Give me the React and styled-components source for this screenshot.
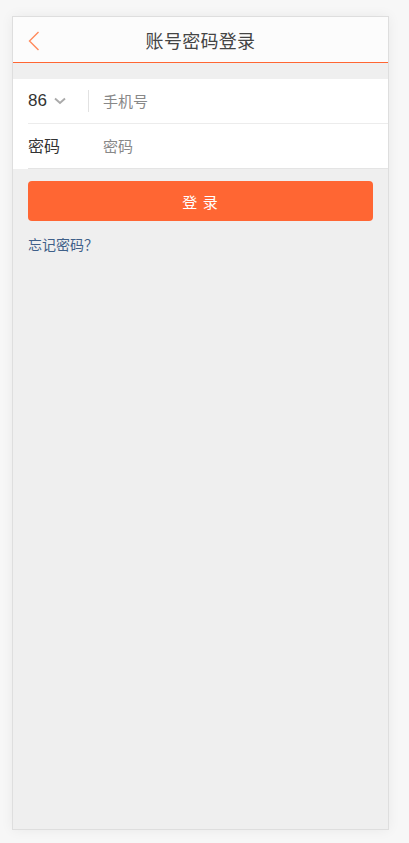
import React from 'react'
import styled, { createGlobalStyle } from 'styled-components'

const GlobalStyle = createGlobalStyle`
    html, body {
        margin: 0;
        padding: 0;
        background: #f7f7f7;
        font-family: "Liberation Sans", "Noto Sans CJK SC", sans-serif;
    }
`

function BackIcon() {
    return (
        <svg width="12" height="20" viewBox="0 0 12 20">
            <polyline
                points="10.5,1 1.5,10 10.5,19"
                fill="none"
                stroke="#ff8a5c"
                strokeWidth="1.4"
            />
        </svg>
    )
}

function ChevronDown() {
    return (
        <svg width="12" height="8" viewBox="0 0 12 8">
            <polyline
                points="1,1.5 6,6 11,1.5"
                fill="none"
                stroke="#aaa"
                strokeWidth="1.9"
            />
        </svg>
    )
}

function App() {
    return (
        <>
            <GlobalStyle />
            <Page>
                <Frame>
                    <Header>
                        <BackButton>
                            <BackIcon />
                        </BackButton>
                        <Title>账号密码登录</Title>
                    </Header>

                    <Form>
                        <Row divider>
                            <CountryCode>
                                86
                                <ChevronDown />
                            </CountryCode>
                            <Separator />
                            <Input placeholder="手机号" />
                        </Row>
                        <Row>
                            <Label>密码</Label>
                            <Input type="password" placeholder="密码" />
                        </Row>
                    </Form>

                    <Button type="button">登 录</Button>
                    <Forgot>忘记密码？</Forgot>
                </Frame>
            </Page>
        </>
    )
}

const Page = styled.div`
    padding: 16px 0 0 12px;
    height: 843px;
    box-sizing: border-box;
`

const Frame = styled.div`
    width: 377px;
    height: 814px;
    box-sizing: border-box;
    border: 1px solid #dedede;
    background: #efefef;
    box-shadow: 0 0 12px rgba(0, 0, 0, 0.06);
    display: flex;
    flex-direction: column;
`

const Header = styled.div`
    height: 45px;
    background: #fcfcfc;
    border-bottom: 1px solid #ff6633;
    display: flex;
    align-items: center;
    justify-content: center;
    position: relative;
`

const BackButton = styled.div`
    position: absolute;
    left: 15px;
    top: 14px;
    display: flex;
`

const Title = styled.h1`
    margin: 0;
    font-size: 18px;
    font-weight: normal;
    color: #444;
    letter-spacing: 0.3px;
    font-family: "Noto Sans CJK SC", sans-serif;
`

const Form = styled.div`
    margin-top: 16px;
    background: #fff;
    display: flex;
    flex-direction: column;
`

const Row = styled.div`
    height: 44px;
    margin-left: 15px;
    display: flex;
    align-items: center;
    border-bottom: 1px solid ${(p) => (p.divider ? '#ececec' : '#e4e4e4')};
`

const CountryCode = styled.div`
    width: 44px;
    display: flex;
    align-items: center;
    gap: 7px;
    font-size: 17px;
    color: #333;
    font-family: "Liberation Sans", sans-serif;
    padding-bottom: 1px;
`

const Separator = styled.div`
    width: 1px;
    height: 22px;
    background: #e2e2e2;
    margin: 0 14px 0 16px;
`

const Label = styled.div`
    width: 75px;
    font-size: 16px;
    color: #333;
    font-family: "Noto Sans CJK SC", sans-serif;
    padding-bottom: 2px;
`

const Input = styled.input`
    flex: 1;
    border: none;
    outline: none;
    background: transparent;
    font-size: 15px;
    color: #333;
    padding: 0 0 2px;
    font-family: "Noto Sans CJK SC", sans-serif;

    &::placeholder {
        color: #888;
    }
`

const Button = styled.button`
    margin: 12px 15px 0;
    height: 40px;
    border: none;
    border-radius: 4px;
    background: #ff6633;
    color: #fff;
    font-size: 15px;
    letter-spacing: 1px;
    font-family: "Noto Sans CJK SC", sans-serif;
    cursor: pointer;
`

const Forgot = styled.a`
    margin: 13px 0 0 15px;
    font-size: 14px;
    color: #3f6089;
    font-family: "Noto Sans CJK SC", sans-serif;
    cursor: pointer;
`

export default App
